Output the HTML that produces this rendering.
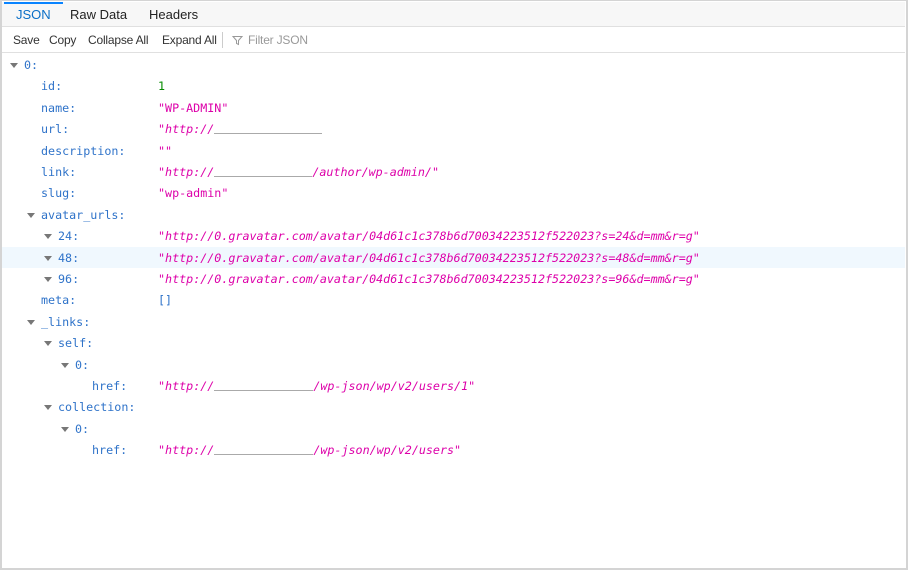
<!DOCTYPE html>
<html><head><meta charset="utf-8"><style>
*{margin:0;padding:0;box-sizing:border-box}
body{width:908px;height:570px;background:#fff;position:relative;overflow:hidden;font-family:"Liberation Sans",sans-serif}
.frame{position:absolute;left:0;top:0;width:908px;height:570px;border:2px solid #d4d4d4;border-top:1px solid #d4d4d4}
.tabs{position:absolute;left:2px;top:2px;width:903px;height:25px;background:#f7f7f7;border-bottom:1px solid #e0e0e0;font-size:13px}
.tab{position:absolute;top:0;height:25px;line-height:25px;color:#222}
.tab.sel{color:#0a6fc7;border-top:2px solid #0a84ff;line-height:22px;padding:0 12px;left:2px}
.tb{position:absolute;left:2px;top:27px;width:903px;height:26px;border-bottom:1px solid #e0e0e0;font-size:12px;color:#333;letter-spacing:-0.2px}
.tb span{position:absolute;top:0;line-height:26px}
.row{position:absolute;left:2px;width:903px;height:21.4px;line-height:21.4px;font-family:"DejaVu Sans Mono",monospace;font-size:11.7px;white-space:pre;padding-top:1px}
.k{position:absolute;color:#2f73c9}
.v{position:absolute;left:156px}
.s{color:#dd00a9}
.i{font-style:italic}
.n{color:#058b00}
.tri{position:absolute;top:9px;width:0;height:0;border-left:4px solid transparent;border-right:4px solid transparent;border-top:5px solid #777}
.red{display:inline-block;border-bottom:1px solid #aaa;height:11px;vertical-align:-1px}
</style></head><body>
<div class="frame"></div>
<div class="tabs">
<div class="tab sel">JSON</div>
<div class="tab" style="left:68px">Raw Data</div>
<div class="tab" style="left:147px">Headers</div>
</div>
<div class="tb">
<span style="left:11px">Save</span>
<span style="left:47px">Copy</span>
<span style="left:86px">Collapse All</span>
<span style="left:160px">Expand All</span>
<div style="position:absolute;left:220px;top:5px;width:1px;height:16px;background:#ccc"></div>
<svg style="position:absolute;left:230px;top:8px" width="11" height="11" viewBox="0 0 11 11"><path d="M1 1.5h9L6.5 5.5v4L4.5 8.5v-3z" fill="none" stroke="#999" stroke-width="1"/></svg>
<span style="left:246px;color:#999">Filter JSON</span>
</div>

<div class="row" style="top:54px"><div class="tri" style="left:8px"></div><span class="k" style="left:22px">0:</span></div>
<div class="row" style="top:75.4px"><span class="k" style="left:39px">id:</span><span class="v n">1</span></div>
<div class="row" style="top:96.8px"><span class="k" style="left:39px">name:</span><span class="v s">"WP-ADMIN"</span></div>
<div class="row" style="top:118.2px"><span class="k" style="left:39px">url:</span><span class="v s">"<span class="i">http://</span><span class="red" style="width:108px"></span></span></div>
<div class="row" style="top:139.6px"><span class="k" style="left:39px">description:</span><span class="v s">""</span></div>
<div class="row" style="top:161px"><span class="k" style="left:39px">link:</span><span class="v s">"<span class="i">http://</span><span class="red" style="width:98px"></span><span class="i">/author/wp-admin/</span>"</span></div>
<div class="row" style="top:182.4px"><span class="k" style="left:39px">slug:</span><span class="v s">"wp-admin"</span></div>
<div class="row" style="top:203.8px"><div class="tri" style="left:25px"></div><span class="k" style="left:39px">avatar_urls:</span></div>
<div class="row" style="top:225.2px"><div class="tri" style="left:42px"></div><span class="k" style="left:56px">24:</span><span class="v s">"<span class="i">http://0.gravatar.com/avatar/04d61c1c378b6d70034223512f522023?s=24&amp;d=mm&amp;r=g</span>"</span></div>
<div class="row" style="top:246.6px;background:#f0f8fe"><div class="tri" style="left:42px"></div><span class="k" style="left:56px">48:</span><span class="v s">"<span class="i">http://0.gravatar.com/avatar/04d61c1c378b6d70034223512f522023?s=48&amp;d=mm&amp;r=g</span>"</span></div>
<div class="row" style="top:268px"><div class="tri" style="left:42px"></div><span class="k" style="left:56px">96:</span><span class="v s">"<span class="i">http://0.gravatar.com/avatar/04d61c1c378b6d70034223512f522023?s=96&amp;d=mm&amp;r=g</span>"</span></div>
<div class="row" style="top:289.4px"><span class="k" style="left:39px">meta:</span><span class="v" style="color:#2f73c9">[]</span></div>
<div class="row" style="top:310.8px"><div class="tri" style="left:25px"></div><span class="k" style="left:39px">_links:</span></div>
<div class="row" style="top:332.2px"><div class="tri" style="left:42px"></div><span class="k" style="left:56px">self:</span></div>
<div class="row" style="top:353.6px"><div class="tri" style="left:59px"></div><span class="k" style="left:73px">0:</span></div>
<div class="row" style="top:375px"><span class="k" style="left:90px">href:</span><span class="v s">"<span class="i">http://</span><span class="red" style="width:99px"></span><span class="i">/wp-json/wp/v2/users/1</span>"</span></div>
<div class="row" style="top:396.4px"><div class="tri" style="left:42px"></div><span class="k" style="left:56px">collection:</span></div>
<div class="row" style="top:417.8px"><div class="tri" style="left:59px"></div><span class="k" style="left:73px">0:</span></div>
<div class="row" style="top:439.2px"><span class="k" style="left:90px">href:</span><span class="v s">"<span class="i">http://</span><span class="red" style="width:99px"></span><span class="i">/wp-json/wp/v2/users</span>"</span></div>
</body></html>
